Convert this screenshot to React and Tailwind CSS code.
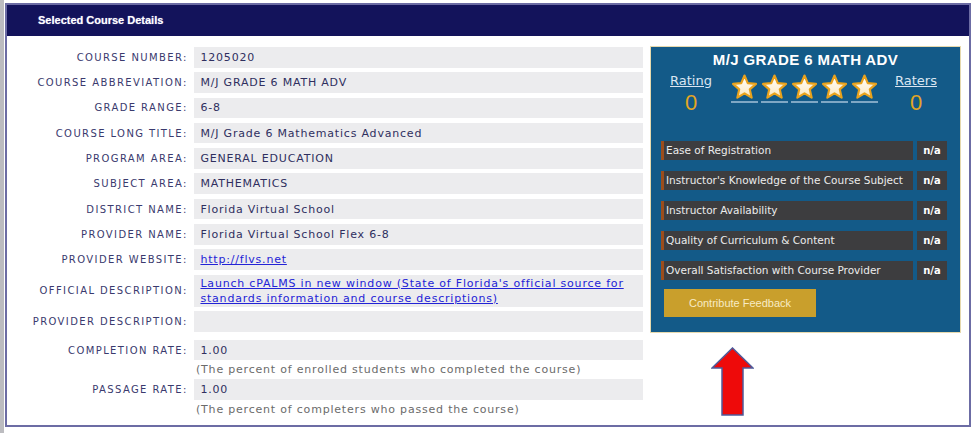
import React from "react";

const rows = [
  { label: "COURSE NUMBER:", value: "1205020" },
  { label: "COURSE ABBREVIATION:", value: "M/J GRADE 6 MATH ADV" },
  { label: "GRADE RANGE:", value: "6-8" },
  { label: "COURSE LONG TITLE:", value: "M/J Grade 6 Mathematics Advanced" },
  { label: "PROGRAM AREA:", value: "GENERAL EDUCATION" },
  { label: "SUBJECT AREA:", value: "MATHEMATICS" },
  { label: "DISTRICT NAME:", value: "Florida Virtual School" },
  { label: "PROVIDER NAME:", value: "Florida Virtual School Flex 6-8" },
];

const ratings = [
  "Ease of Registration",
  "Instructor's Knowledge of the Course Subject",
  "Instructor Availability",
  "Quality of Curriculum & Content",
  "Overall Satisfaction with Course Provider",
];

function Star() {
  return (
    <div className="flex w-[25px] flex-col items-center">
      <svg width="27" height="26" viewBox="0 0 24 24">
        <defs>
          <linearGradient id="starFill" x1="0" y1="0" x2="0" y2="1">
            <stop offset="0" stopColor="#ffffff" />
            <stop offset="1" stopColor="#fbe7bf" />
          </linearGradient>
        </defs>
        <polygon
          points="12,1.4 15,8.4 22.6,9.1 16.9,14.2 18.6,21.8 12,17.9 5.4,21.8 7.1,14.2 1.4,9.1 9,8.4"
          fill="url(#starFill)"
          stroke="#e9a21d"
          strokeWidth="2"
          strokeLinejoin="round"
        />
      </svg>
      <div className="mt-[1px] h-[2px] w-[27px] bg-[#7fa7c4]" />
    </div>
  );
}

function Field({ label, children, tall }) {
  return (
    <div className="flex items-center">
      <div className="mr-[-1.4px] w-[181px] text-right text-[10px] tracking-[1.4px] text-[#3a3a6e]">{label}</div>
      <div className={`ml-[8px] w-[449px] bg-[#ececee] px-[6px] text-[11px] leading-[15px] tracking-[0.8px] text-[#2f2f5f] ${tall ? "py-[1px]" : "flex h-[20.5px] items-center"}`}>
        {children}
      </div>
    </div>
  );
}

export default function App() {
  return (
    <div className="h-[433px] w-[974px] overflow-hidden border-l-4 border-[#bcbcc0] bg-white pl-[1px] pt-[3px]" style={{ fontFamily: '"DejaVu Sans", Verdana, sans-serif' }}>
      <div className="h-[424px] w-[966px] border-2 border-[#6c6ca4]">
        <div className="flex h-[31px] items-center bg-[#13135b] pl-[31px] font-['Liberation_Sans',Arial,sans-serif] text-[11px] font-bold text-white [text-shadow:0_0_1px_#9999cc]">
          Selected Course Details
        </div>

        <div className="flex gap-[7px] pt-[10px]">
          <div className="flex w-[636px] flex-col">
            <div className="mt-[1px] flex flex-col gap-[4.8px]">
              {rows.map((row) => (
                <Field key={row.label} label={row.label}>{row.value}</Field>
              ))}
              <Field label="PROVIDER WEBSITE:">
                <a href="#" className="text-[#2323d6] underline">http://flvs.net</a>
              </Field>
              <Field label="OFFICIAL DESCRIPTION:" tall>
                <a href="#" className="text-[#2323d6] underline">
                  Launch cPALMS in new window (State of Florida's official source for standards information and course descriptions)
                </a>
              </Field>
              <Field label="PROVIDER DESCRIPTION:"> </Field>
            </div>

            <div className="mt-[8px]">
              <Field label="COMPLETION RATE:">1.00</Field>
              <div className="ml-[189px] h-[19px] text-[11px] leading-[19px] tracking-[0.8px] text-[#6b6b6b]">
                (The percent of enrolled students who completed the course)
              </div>
              <Field label="PASSAGE RATE:">1.00</Field>
              <div className="ml-[189px] h-[19px] text-[11px] leading-[19px] tracking-[0.8px] text-[#6b6b6b]">
                (The percent of completers who passed the course)
              </div>
            </div>
          </div>

          <div className="flex w-[311px] flex-col">
            <div className="h-[287px] border border-[#e6d9ad] bg-[#135a88] pt-[5px]">
              <div className="text-center font-['Liberation_Sans',Arial,sans-serif] text-[15px] font-bold leading-[16px] tracking-[0.4px] text-white">
                M/J GRADE 6 MATH ADV
              </div>
              <div className="mt-[4px] flex items-start">
                <div className="ml-[18px] flex w-[44px] flex-col items-center">
                  <a href="#" className="text-[13px] leading-[18px] text-[#dbe6f2] underline">Rating</a>
                  <div className="mt-[2px] font-['Liberation_Sans',Arial,sans-serif] text-[22px] leading-[22px] text-[#e3a623]">0</div>
                </div>
                <div className="ml-[19px] mt-[2px] flex gap-[5px]">
                  <Star />
                  <Star />
                  <Star />
                  <Star />
                  <Star />
                </div>
                <div className="ml-[17px] flex w-[44px] flex-col items-center">
                  <a href="#" className="text-[13px] leading-[18px] text-[#dbe6f2] underline">Raters</a>
                  <div className="mt-[2px] font-['Liberation_Sans',Arial,sans-serif] text-[22px] leading-[22px] text-[#e3a623]">0</div>
                </div>
              </div>

              <div className="mt-[27px] flex flex-col gap-[11px] pl-[10px] pr-[13px]">
                {ratings.map((item) => (
                  <div key={item} className="flex h-[19px] gap-[4px]">
                    <div className="flex flex-1 items-center border-l-[3px] border-[#9c4d1c] bg-[#3d3d3f] pl-[2px] text-[10.5px] text-[#ececec]">
                      {item}
                    </div>
                    <div className="flex w-[30px] items-center justify-center bg-[#3d3d3f] text-[10px] font-bold text-white">n/a</div>
                  </div>
                ))}
              </div>

              <button
                type="button"
                className="ml-[13px] mt-[9px] h-[28px] w-[152px] bg-[#c99f2c] font-['Liberation_Sans',Arial,sans-serif] text-[11px] text-[#f8ebc4]"
              >
                Contribute Feedback
              </button>
            </div>

            <svg className="ml-[61px] mt-[14px]" width="43" height="69" viewBox="0 0 43 69">
              <polygon
                points="21.5,1 42,21 32,21 32,68 11,68 11,21 1,21"
                fill="#ee0a0a"
                stroke="#4f5b9a"
                strokeWidth="1.5"
                strokeLinejoin="miter"
              />
            </svg>
          </div>
        </div>
      </div>
    </div>
  );
}
